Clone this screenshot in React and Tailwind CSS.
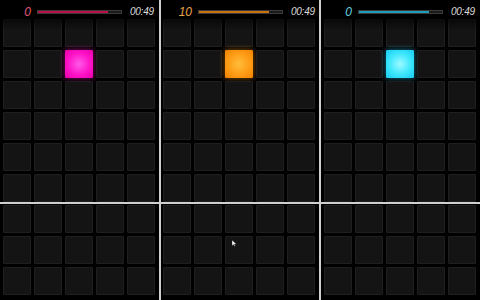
import React from 'react';

const players = [
    {
        score: '0',
        scoreColor: 'text-[#e2557f]',
        fill: 'bg-[#b8124a]',
        lit: 'bg-[radial-gradient(circle,#ff5ae8_0%,#ff14c8_55%,#e600aa_100%)] shadow-[0_0_6px_rgba(255,20,200,0.55)]',
    },
    {
        score: '10',
        scoreColor: 'text-[#eaa24a]',
        fill: 'bg-[#c8720e]',
        lit: 'bg-[radial-gradient(circle,#ffbd3a_0%,#ff9c16_55%,#ee8200_100%)] shadow-[0_0_6px_rgba(255,150,20,0.55)]',
    },
    {
        score: '0',
        scoreColor: 'text-[#62d2e4]',
        fill: 'bg-[#1f9cb8]',
        lit: 'bg-[radial-gradient(circle,#9afaff_0%,#3ce6ff_55%,#18c8ee_100%)] shadow-[0_0_6px_rgba(40,220,255,0.55)]',
    },
];

const ROWS = 9;
const COLS = 5;

function Panel({ player, width, pad }) {
    const cells = [];
    for (let r = 0; r < ROWS; r++) {
        for (let c = 0; c < COLS; c++) {
            const on = r === 1 && c === 2;
            cells.push(
                <div
                    key={`${r}-${c}`}
                    className={
                        on
                            ? `h-[28px] rounded-[1px] ${player.lit}`
                            : 'h-[28px] rounded-[1px] bg-[#141414] border border-[#1f1f1f]'
                    }
                />
            );
        }
    }

    return (
        <div className={`relative h-full shrink-0 pt-[19px] ${width} ${pad}`}>
            <div className="grid grid-cols-[repeat(5,28px)] gap-[3px]">{cells}</div>

            {/* barre du haut : score, progression, temps */}
            <div className="absolute top-0 left-0 right-0 h-[30px] bg-gradient-to-b from-black via-black/85 to-transparent">
                <div className="flex items-center h-[24px]">
                    <span className={`w-[31px] text-right italic text-[12px] leading-none ${player.scoreColor}`}>
                        {player.score}
                    </span>
                    <div className="ml-[6px] w-[85px] h-[4px] bg-[#1a1a1a] border border-[#3a3a3a] flex">
                        <div className={`h-full w-[84%] ${player.fill}`} />
                    </div>
                    <span className="ml-[8px] italic text-[10px] leading-none text-[#dcdcdc] tracking-tight">00:49</span>
                </div>
            </div>
        </div>
    );
}

export default function App() {
    return (
        <div
            className="relative w-[480px] h-[300px] bg-black overflow-hidden flex"
            style={{ fontFamily: '"Liberation Sans", Arial, sans-serif' }}
        >
            <Panel player={players[0]} width="w-[159px]" pad="pl-[3px]" />
            <div className="w-[2px] h-full bg-[#cfcfcf] shrink-0" />
            <Panel player={players[1]} width="w-[158px]" pad="pl-[2px]" />
            <div className="w-[2px] h-full bg-[#cfcfcf] shrink-0" />
            <Panel player={players[2]} width="w-[159px]" pad="pl-[3px]" />

            {/* ligne de frappe */}
            <div className="absolute left-0 right-0 top-[202px] h-[2px] bg-[#cfcfcf]" />

            {/* curseur souris */}
            <svg className="absolute left-[232px] top-[240px]" width="5" height="7" viewBox="0 0 5 7">
                <path d="M0 0 L0 6 L1.5 4.5 L2.5 6.5 L3.3 6 L2.4 4.2 L4.5 4.2 Z" fill="#fff" stroke="#000" strokeWidth="0.4" />
            </svg>
        </div>
    );
}
